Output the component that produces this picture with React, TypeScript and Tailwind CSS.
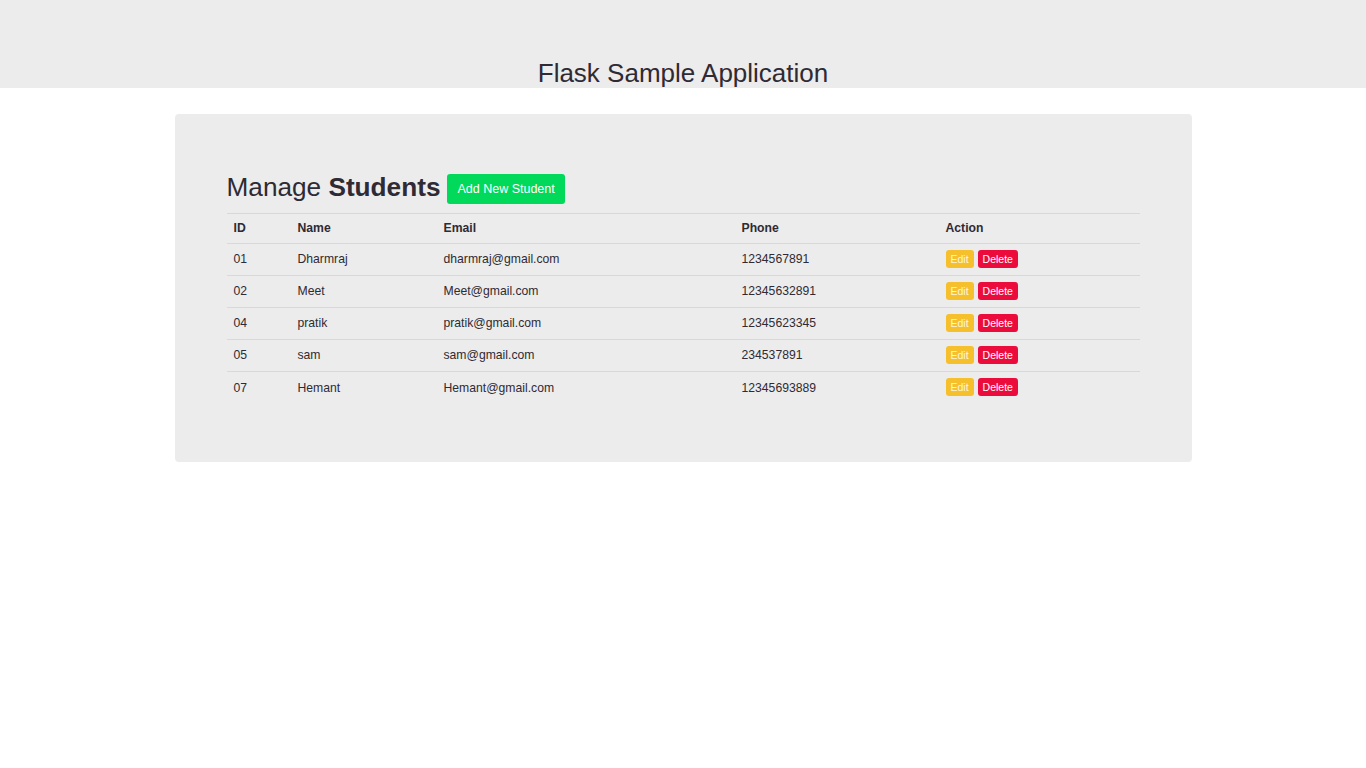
import React from "react";

const rows = [
  ["01", "Dharmraj", "dharmraj@gmail.com", "1234567891"],
  ["02", "Meet", "Meet@gmail.com", "12345632891"],
  ["04", "pratik", "pratik@gmail.com", "12345623345"],
  ["05", "sam", "sam@gmail.com", "234537891"],
  ["07", "Hemant", "Hemant@gmail.com", "12345693889"],
];

export default function App() {
  return (
    <div className="min-h-[768px] bg-white text-[#2f2a33]" style={{ fontFamily: '"Liberation Sans", Arial, sans-serif' }}>
      <div className="h-[88px] bg-[#ececec] flex items-end justify-center overflow-visible">
        <h1 className="text-[26px] leading-[30px] mb-[0px]">Flask Sample Application</h1>
      </div>
      <div className="pt-[26px] flex justify-center">
        <div className="w-[1017px] bg-[#ececec] rounded-[4px] px-[52px] pt-[58px] pb-[58px]">
          <div className="flex items-center h-[30px]">
            <h2 className="text-[26.2px] leading-[30px]">
              Manage <b>Students</b>
            </h2>
            <button className="ml-[7px] mt-[4px] h-[30px] px-[10px] bg-[#00d95a] text-white text-[12.5px] rounded-[3px]">
              Add New Student
            </button>
          </div>
          <table className="mt-[11px] w-[913px] text-[12.2px] border-collapse">
            <thead>
              <tr className="border-t border-[#d8d8d8] h-[30px] text-left">
                <th className="w-[64px] pl-[7px] font-bold">ID</th>
                <th className="w-[146px] pl-[7px] font-bold">Name</th>
                <th className="w-[298px] pl-[7px] font-bold">Email</th>
                <th className="w-[204px] pl-[7px] font-bold">Phone</th>
                <th className="pl-[7px] font-bold">Action</th>
              </tr>
            </thead>
            <tbody>
              {rows.map((r) => (
                <tr key={r[0]} className="border-t border-[#d8d8d8] h-[32px]">
                  <td className="pl-[7px]">{r[0]}</td>
                  <td className="pl-[7px]">{r[1]}</td>
                  <td className="pl-[7px]">{r[2]}</td>
                  <td className="pl-[7px]">{r[3]}</td>
                  <td className="pl-[7px]">
                    <div className="flex gap-[4px] mt-[-1px]">
                      <span className="h-[18px] px-[5px] bg-[#f5c02c] text-[#fff6dc] text-[10.5px] leading-[18px] rounded-[3px]">Edit</span>
                      <span className="h-[18px] px-[5px] bg-[#ec0c3c] text-white text-[10.5px] leading-[18px] rounded-[3px]">Delete</span>
                    </div>
                  </td>
                </tr>
              ))}
            </tbody>
          </table>
        </div>
      </div>
    </div>
  );
}
